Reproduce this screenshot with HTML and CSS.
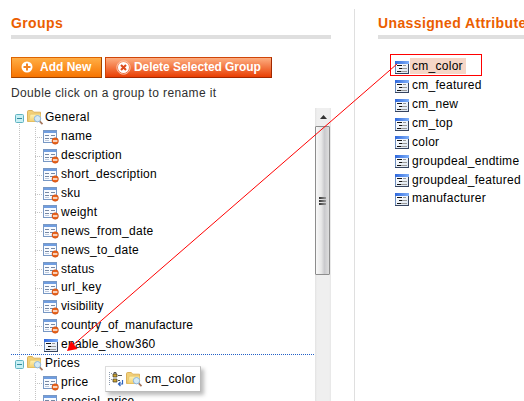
FILE: index.html
```html
<!DOCTYPE html>
<html lang="en">
<head>
<meta charset="utf-8">
<title>Attribute Groups</title>
<link rel="stylesheet" href="styles.css">
</head>
<body>
<svg class="defs" aria-hidden="true">
  <defs>
    <linearGradient id="bar" x1="0" x2="1"><stop offset="0" stop-color="#2f68dc"/><stop offset="1" stop-color="#7fb0fa"/></linearGradient>
    <linearGradient id="paper" x1="0" x2="1" y2="1"><stop offset="0" stop-color="#fff"/><stop offset="1" stop-color="#dce6f2"/></linearGradient>
    <linearGradient id="gold" x1="0" x2="0" y1="0" y2="1"><stop offset="0" stop-color="#fff3b4"/><stop offset="1" stop-color="#f3cf70"/></linearGradient>
    <symbol id="attr" viewBox="0 0 14 13">
      <path fill="#6d8dbd" d="M0 0h14v13H0z"/><path fill="url(#paper)" d="M1 3h12v9H1z"/><path fill="url(#bar)" d="M0 0h14v3H0z"/>
      <path fill="#36445f" d="M0 12h14v1H0zM13 3h1v10h-1z"/>
      <path fill="#151515" d="M2 4h5v1H2zM4 7h3v1H4zM2 10h4v1H2z"/><path fill="#999" d="M8 4h3v1H8zM7 7h5v1H7zM6 10h6v1H6z"/>
    </symbol>
    <symbol id="locked" viewBox="0 0 16 15">
      <path fill="#7898c4" d="M0 0h14v13H0z"/><path fill="#f8fbff" d="M1 3h12v9H1z"/><path fill="#6f9de0" d="M1 1h12v2H1z"/>
      <path fill="#7688a4" d="M2 5h4v1H2zM8 5h4v1H8zM2 8h4v1H2zM7 8h3v1H7z"/><path fill="#bdc9dc" d="M2 10h4v1H2z"/>
      <circle cx="12.2" cy="11" r="3.2" fill="#e8641c" stroke="#c9460b" stroke-width=".6"/><path fill="#fff" d="M10 10.3h4.4v1.4H10z"/>
    </symbol>
    <symbol id="folder" viewBox="0 0 17 15">
      <path d="M.5 11.5V1.7Q.5.5 1.7.5h3.6l1.4 1.7h6.8v9.3z" fill="#f2d078" stroke="#dcb25c"/>
      <path d="M1.5 11.5 3.2 4.2h10.3v7.3z" fill="url(#gold)" stroke="#e3bd62" stroke-width=".6"/>
      <path d="m12.5 11.2 3 3" stroke="#a6785f" stroke-width="1.7"/>
      <circle cx="10.5" cy="8.7" r="3.2" fill="#cfeaff" fill-opacity=".9" stroke="#8bb5dc"/>
    </symbol>
    <symbol id="minus" viewBox="0 0 9 9"><rect x=".5" y=".5" width="8" height="8" rx="1" fill="#c8f0f5" stroke="#60b3c1"/><path d="M2 4.5h5" stroke="#32899b"/></symbol>
  </defs>
</svg>
<main class="page">
  <section class="groups">
    <h2>Groups</h2>
    <div class="buttons">
      <button class="btn add"><svg width="12" height="12" viewBox="0 0 12 12"><circle cx="6" cy="6" r="5.5" fill="#fff"/><path d="M6 2.5v7M2.5 6h7" stroke="#f28424" stroke-width="2"/></svg><span>Add New</span></button>
      <button class="btn del"><svg width="15" height="15" viewBox="0 0 15 15"><circle cx="7.5" cy="7.5" r="6.7" fill="none" stroke="#fbc2a8"/><circle cx="7.5" cy="7.5" r="5.5" fill="#fff"/><path d="m5 5 5 5m0-5-5 5" stroke="#dd4b1c" stroke-width="2.1"/></svg><span>Delete Selected Group</span></button>
    </div>
    <p class="hint">Double click on a group to rename it</p>
    <div class="scroller">
      <div class="tree">
        <div class="row group"><svg class="toggle"><use href="#minus"/></svg><svg class="folder"><use href="#folder"/></svg><span>General</span></div>
        <ul class="children">
          <li class="row"><svg class="locked"><use href="#locked"/></svg><span>name</span></li>
          <li class="row"><svg class="locked"><use href="#locked"/></svg><span>description</span></li>
          <li class="row"><svg class="locked"><use href="#locked"/></svg><span>short_description</span></li>
          <li class="row"><svg class="locked"><use href="#locked"/></svg><span>sku</span></li>
          <li class="row"><svg class="locked"><use href="#locked"/></svg><span>weight</span></li>
          <li class="row"><svg class="locked"><use href="#locked"/></svg><span>news_from_date</span></li>
          <li class="row"><svg class="locked"><use href="#locked"/></svg><span>news_to_date</span></li>
          <li class="row"><svg class="locked"><use href="#locked"/></svg><span>status</span></li>
          <li class="row"><svg class="locked"><use href="#locked"/></svg><span>url_key</span></li>
          <li class="row tight"><svg class="locked"><use href="#locked"/></svg><span>visibility</span></li>
          <li class="row tight"><svg class="locked"><use href="#locked"/></svg><span>country_of_manufacture</span></li>
          <li class="row last"><svg class="attr"><use href="#attr"/></svg><span>enable_show360</span></li>
        </ul>
        <div class="row group drop"><svg class="toggle"><use href="#minus"/></svg><svg class="folder"><use href="#folder"/></svg><span>Prices</span></div>
        <ul class="children">
          <li class="row"><svg class="locked"><use href="#locked"/></svg><span>price</span></li>
          <li class="row"><svg class="locked"><use href="#locked"/></svg><span>special_price</span></li>
        </ul>
      </div>
      <div class="scrollbar">
        <svg class="up" width="16" height="18" viewBox="0 0 16 18"><path d="M5 11 8.5 7l3.5 4z" fill="#333"/></svg>
        <div class="thumb"><i></i><i></i><i></i></div>
      </div>
    </div>
  </section>
  <section class="unassigned">
    <h2>Unassigned Attributes</h2>
    <ul class="attributes">
      <li class="row selected"><svg class="attr"><use href="#attr"/></svg><span>cm_color</span></li>
      <li class="row"><svg class="attr"><use href="#attr"/></svg><span>cm_featured</span></li>
      <li class="row"><svg class="attr"><use href="#attr"/></svg><span>cm_new</span></li>
      <li class="row"><svg class="attr"><use href="#attr"/></svg><span>cm_top</span></li>
      <li class="row"><svg class="attr"><use href="#attr"/></svg><span>color</span></li>
      <li class="row"><svg class="attr"><use href="#attr"/></svg><span>groupdeal_endtime</span></li>
      <li class="row"><svg class="attr"><use href="#attr"/></svg><span>groupdeal_featured</span></li>
      <li class="row"><svg class="attr"><use href="#attr"/></svg><span>manufacturer</span></li>
    </ul>
  </section>
  <div class="ghost">
    <svg width="16" height="16" viewBox="0 0 16 16"><path d="M1.5 1v14M3 2.5h2M3 8.5h2" stroke="#8d9bad" stroke-dasharray="1 1"/><path d="M5 3h4v3H5zM5 8h4v3H5z" fill="#d3a72e" stroke="#37332a" stroke-width=".7"/><path d="M6 3V1.5h2V3M10 4.5h4M10 9.5h2" fill="none" stroke="#555"/><path d="M14.5 9v4h-4M12.5 11l-2 2 2 2" fill="none" stroke="#2f64bd" stroke-width="1.2"/></svg>
    <svg class="folder"><use href="#folder"/></svg><span>cm_color</span>
  </div>
  <svg class="arrow" width="524" height="401" viewBox="0 0 524 401"><rect x="390.5" y="54.5" width="91" height="21" fill="none" stroke="#f00"/><path d="M397 64 72 346" stroke="#f00" stroke-width="1"/><path d="m67 351 4-10 6.5 8z" fill="#f00"/></svg>
</main>
</body>
</html>
```
FILE: styles.css
```css
* { box-sizing: border-box; }
body { margin: 0; background: #fff; overflow: hidden; }
ul, h2, p { margin: 0; padding: 0; list-style: none; }
svg { display: block; flex: none; }
.defs { position: absolute; width: 0; height: 0; }
.page {
  position: relative;
  display: flex;
  width: 524px;
  height: 401px;
  overflow: hidden;
  font: 12px/16px "Liberation Sans", Arial, sans-serif;
  letter-spacing: .27px;
  color: #000;
}
.groups { flex: none; width: 320px; margin-left: 11px; }
h2 {
  height: 39px;
  padding-top: 14px;
  border-bottom: 4px solid #dfdfdf;
  font-size: 14px;
  line-height: 18px;
  color: #eb5e00;
  letter-spacing: .38px;
  white-space: nowrap;
}
.buttons { display: flex; gap: 3px; margin-top: 18px; }
.btn {
  display: flex;
  align-items: center;
  height: 21px;
  padding: 0 10px 1px;
  border: 1px solid;
  color: #fff;
  font: bold 12px/16px "Liberation Sans", Arial, sans-serif;
  white-space: nowrap;
}
.add { width: 91px; gap: 7px; padding-left: 9px; border-color: #de6400 #a04300 #a04300 #de6400; background: linear-gradient(#ffae45, #f77400); }
.del { width: 167px; gap: 3px; padding-left: 10px; letter-spacing: -.06px; border-color: #d04508 #a12800 #a12800 #d04508; background: linear-gradient(#fdae80, #e93e03); }
.hint { margin-top: 6px; line-height: 18px; color: #2f2f2f; letter-spacing: .37px; }
.scroller { display: flex; height: 300px; margin-top: 6px; overflow: hidden; }
.tree {
  width: 304px;
  background: repeating-linear-gradient(#c4c4c4 0 1px, transparent 1px 2px) 8px 8px / 1px 292px no-repeat;
}
.row { display: flex; align-items: center; height: 18.9px; white-space: nowrap; }
.group { padding-left: 4px; }
.toggle { width: 9px; height: 9px; margin-top: 2px; }
.folder { width: 17px; height: 15px; margin: 0 1px 0 3px; }
.children {
  padding-left: 24px;
  background: repeating-linear-gradient(#c4c4c4 0 1px, transparent 1px 2px) 24px 0 / 1px calc(100% - 8px) no-repeat;
}
.children .row { padding-left: 8px; background: repeating-linear-gradient(90deg, #c4c4c4 0 1px, transparent 1px 2px) 0 10px / 7px 1px no-repeat; }
.children .tight { letter-spacing: .12px; }
.locked { width: 16px; height: 15px; margin: 2px 2px 0 0; }
.attr { width: 14px; height: 13px; margin-top: 2px; }
.last .attr { margin-right: 3px; margin-left: 1px; }
.drop { height: 19.2px; background: repeating-linear-gradient(90deg, #2260c8 0 1px, transparent 1px 2px) 0 0 / 100% 1px no-repeat; }
.scrollbar { width: 16px; background: linear-gradient(90deg, #e2e2e2, #efefef 2px 14px, #e7e7e7); }
.thumb {
  display: flex;
  flex-direction: column;
  align-items: center;
  justify-content: center;
  gap: 1px;
  width: 15px;
  height: 149px;
  border: 1px solid #8d8d8d;
  border-radius: 1px;
  background: linear-gradient(90deg, #f8f8f8, #e8e8e8 40%, #cacacd 65%, #dedede);
}
.thumb i { width: 7px; height: 2px; background: linear-gradient(90deg, #333, #999); }
.unassigned { position: relative; flex: none; width: 170px; margin: 0 0 0 23px; padding-left: 24px; background: linear-gradient(#dfdfdf, #dfdfdf) 0 9px / 1px 392px no-repeat; }
.attributes { margin: 18px 0 0 17px; }
.attributes .row { height: 18.86px; }
.attributes .attr { margin-right: 1px; }
.attributes span { padding: 0 2px; }
.attributes .selected span { padding-right: 3px; background: #f5d6c7; }
.ghost {
  position: absolute;
  left: 105px;
  top: 366px;
  display: flex;
  align-items: center;
  width: 96px;
  height: 26px;
  padding-left: 2px;
  border: 1px solid #ddd;
  border-color: #ddd #bbb #bbb #ddd;
  background: #fff;
  box-shadow: 3px 3px 4px #bbb;
}
.ghost .folder { margin: 1px 2px 0; }
.arrow { position: absolute; inset: 0; }
```
